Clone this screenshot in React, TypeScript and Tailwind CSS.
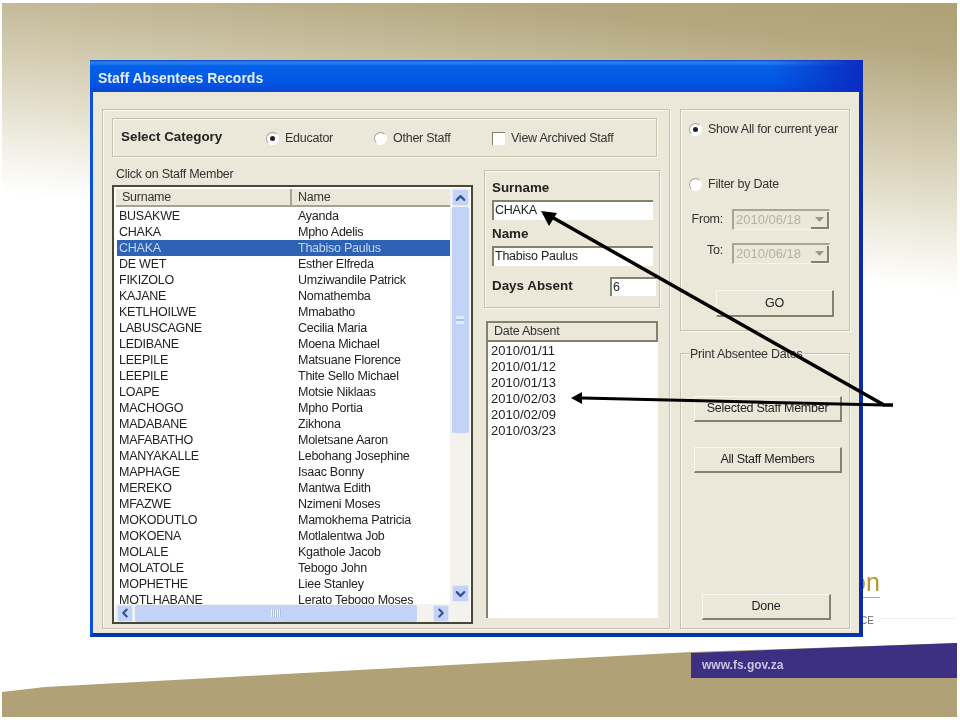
import { ChevronDown, ChevronLeft, ChevronRight, ChevronUp } from 'lucide-react';

const staff = [
  ['BUSAKWE', 'Ayanda'],
  ['CHAKA', 'Mpho Adelis'],
  ['CHAKA', 'Thabiso Paulus'],
  ['DE WET', 'Esther Elfreda'],
  ['FIKIZOLO', 'Umziwandile Patrick'],
  ['KAJANE', 'Nomathemba'],
  ['KETLHOILWE', 'Mmabatho'],
  ['LABUSCAGNE', 'Cecilia Maria'],
  ['LEDIBANE', 'Moena Michael'],
  ['LEEPILE', 'Matsuane Florence'],
  ['LEEPILE', 'Thite Sello Michael'],
  ['LOAPE', 'Motsie Niklaas'],
  ['MACHOGO', 'Mpho Portia'],
  ['MADABANE', 'Zikhona'],
  ['MAFABATHO', 'Moletsane Aaron'],
  ['MANYAKALLE', 'Lebohang Josephine'],
  ['MAPHAGE', 'Isaac Bonny'],
  ['MEREKO', 'Mantwa Edith'],
  ['MFAZWE', 'Nzimeni Moses'],
  ['MOKODUTLO', 'Mamokhema Patricia'],
  ['MOKOENA', 'Motlalentwa Job'],
  ['MOLALE', 'Kgathole Jacob'],
  ['MOLATOLE', 'Tebogo John'],
  ['MOPHETHE', 'Liee Stanley'],
  ['MOTLHABANE', 'Lerato Tebogo Moses'],
];

const dates = ['2010/01/11', '2010/01/12', '2010/01/13', '2010/02/03', '2010/02/09', '2010/03/23'];

const etched = 'border border-[#c4c1b0] shadow-[inset_1px_1px_0_#f8f7f0,1px_1px_0_#f8f7f0]';
const sunken = 'border-t-2 border-l-2 border-[#85816f] bg-white';
const boldLabel = 'font-bold text-[13.4px] tracking-normal text-[#222]';
const scrollBtn = 'flex items-center justify-center rounded-[2px] bg-[#c3d3f8] border border-[#dfe8fd] text-[#35508f]';

function Radio({ checked }: { checked?: boolean }) {
  return (
    <span className="flex h-[13px] w-[13px] shrink-0 items-center justify-center rounded-full border border-[#a5a294] border-r-white border-b-white bg-white">
      {checked && <span className="h-[5px] w-[5px] rounded-full bg-[#222]" />}
    </span>
  );
}

function Button({ label, className }: { label: string; className: string }) {
  return (
    <div className={`flex items-center justify-center border-t border-l border-t-[#f8f7f0] border-l-[#f8f7f0] border-r-2 border-b-2 border-r-[#85816f] border-b-[#85816f] bg-[#ebe8d9] text-[#222] ${className}`}>
      {label}
    </div>
  );
}

function DateCombo() {
  return (
    <div className="flex h-[21px] w-[98px] items-center border-t-2 border-l-2 border-t-[#a9a695] border-l-[#a9a695] border-r border-b border-r-[#f5f4ec] border-b-[#f5f4ec] pl-[2px] text-[13px] tracking-normal text-[#b4b1a3]">
      <span className="flex-1">2010/06/18</span>
      <span className="flex h-[17px] w-[18px] items-center justify-center border-r-2 border-b-2 border-[#85816f]">
        <svg width="9" height="5" viewBox="0 0 9 5">
          <path d="M0 0h9L4.500 5z" fill="#9b9888" />
        </svg>
      </span>
    </div>
  );
}

function StaffList() {
  return (
    <div className="flex h-[439px] w-[361px] flex-col border-2 border-[#4a4738] bg-white px-px pt-px">
      <div className="flex min-h-0 flex-1">
        <div className="flex w-[337px] flex-col overflow-hidden">
          <div className="flex h-[19px] shrink-0 border-t border-l border-white bg-[#ebe8d9] text-[#333]">
            <span className="w-[176px] border-r-2 border-b-2 border-[#a5a294] pl-[6px] leading-[17px]">Surname</span>
            <span className="flex-1 border-b-2 border-[#a5a294] pl-[6px] leading-[17px]">Name</span>
          </div>
          <div className="ml-[2px] overflow-hidden pt-px">
            {staff.map(([surname, name], i) => (
              <div
                key={i}
                className={`grid h-[16px] grid-cols-[179px_1fr] pl-[2px] leading-[16px] ${i === 2 ? 'bg-[#2e62b5] text-[#c6d6f2]' : 'text-[#222]'}`}
              >
                <span>{surname}</span>
                <span>{name}</span>
              </div>
            ))}
          </div>
        </div>
        <div className="flex w-[20px] flex-col items-center bg-[#f4f2ec] pt-px">
          <div className={`h-[17px] w-[17px] ${scrollBtn}`}>
            <ChevronUp size={16} strokeWidth={3.5} />
          </div>
          <div className="mt-[1px] flex h-[226px] w-[17px] items-center justify-center rounded-[2px] bg-[#c3d3f8]">
            <span className="h-[8px] w-[8px] border-y-2 border-[#dfe8fd] bg-[linear-gradient(180deg,#dfe8fd_30%,#aebfe8_30%,#aebfe8_70%,#dfe8fd_70%)]" />
          </div>
          <div className={`mt-auto mb-[2px] h-[17px] w-[17px] ${scrollBtn}`}>
            <ChevronDown size={16} strokeWidth={3.5} />
          </div>
        </div>
      </div>
      <div className="flex h-[18px] shrink-0 items-center gap-[2px] bg-[#f4f2ec] pl-[2px] pr-[20px]">
        <div className={`h-[17px] w-[16px] ${scrollBtn}`}>
          <ChevronLeft size={16} strokeWidth={3.5} />
        </div>
        <div className="flex h-[17px] w-[282px] items-center justify-center rounded-[2px] bg-[#c3d3f8]">
          <span className="h-[8px] w-[10px] bg-[repeating-linear-gradient(90deg,#eef3fe_0,#eef3fe_1px,#a9bbe6_1px,#a9bbe6_2px)]" />
        </div>
        <div className={`ml-[14px] h-[17px] w-[16px] ${scrollBtn}`}>
          <ChevronRight size={16} strokeWidth={3.5} />
        </div>
      </div>
    </div>
  );
}

function DetailsBox() {
  return (
    <div className={`h-[138px] w-[176px] pl-[7px] pr-[3px] pt-[9px] ${etched}`}>
      <div className={`h-[16px] leading-[16px] ${boldLabel}`}>Surname</div>
      <div className={`mt-[4px] h-[20px] w-[161px] pl-px leading-[16px] text-[#222] ${sunken}`}>CHAKA</div>
      <div className={`mt-[6px] h-[16px] leading-[16px] ${boldLabel}`}>Name</div>
      <div className={`mt-[4px] h-[20px] w-[161px] pl-px leading-[16px] text-[#222] ${sunken}`}>Thabiso Paulus</div>
      <div className="mt-[11px] flex h-[19px] items-center justify-between">
        <span className={boldLabel}>Days Absent</span>
        <span className={`h-[19px] w-[46px] pl-px leading-[16px] text-[#222] ${sunken}`}>6</span>
      </div>
    </div>
  );
}

function DatesList() {
  return (
    <div className="ml-[2px] mt-[13px] flex h-[297px] w-[172px] flex-col border-l-2 border-[#85816f] bg-white">
      <div className="h-[21px] border-2 border-l-0 border-[#85816f] bg-[#ebe8d9] pl-[6px] leading-[17px] text-[#333]">Date Absent</div>
      <div className="pl-[3px] pt-px text-[13px] tracking-normal text-[#222]">
        {dates.map((d) => (
          <div key={d} className="h-[16px] leading-[16px]">{d}</div>
        ))}
      </div>
    </div>
  );
}

function MainPanel() {
  return (
    <div className={`h-[520px] w-[568px] shrink-0 pl-[9px] pt-[8px] ${etched}`}>
      <div className={`flex h-[39px] w-[545px] items-center pl-[8px] ${etched}`}>
        <span className={`w-[145px] ${boldLabel}`}>Select Category</span>
        <label className="flex w-[108px] items-center gap-[6px] pt-[2px] text-[#333]">
          <Radio checked />
          Educator
        </label>
        <label className="flex w-[118px] items-center gap-[6px] pt-[2px] text-[#333]">
          <Radio />
          Other Staff
        </label>
        <label className="flex items-center gap-[6px] pt-[2px] text-[#333]">
          <span className="h-[13px] w-[13px] border-t border-l border-[#85816f] bg-white" />
          View Archived Staff
        </label>
      </div>
      <div className="flex">
        <div className="w-[372px] shrink-0">
          <div className="ml-[4px] mt-[9px] mb-[3px] h-[16px] leading-[16px] text-[#333]">Click on Staff Member</div>
          <StaffList />
        </div>
        <div>
          <div className="mt-[13px]">
            <DetailsBox />
          </div>
          <DatesList />
        </div>
      </div>
    </div>
  );
}

function FilterPanel() {
  return (
    <div className={`h-[222px] pl-[8px] pt-[11px] ${etched}`}>
      <label className="flex h-[16px] items-center gap-[6px] whitespace-nowrap text-[#333]">
        <Radio checked />
        Show All for current year
      </label>
      <label className="mt-[39px] flex h-[16px] items-center gap-[6px] text-[#333]">
        <Radio />
        Filter by Date
      </label>
      <div className="mt-[17px] flex items-center text-[#333]">
        <span className="w-[34px] text-right">From:</span>
        <span className="ml-[9px]">
          <DateCombo />
        </span>
      </div>
      <div className="mt-[13px] flex items-center text-[#333]">
        <span className="w-[34px] -translate-y-[3px] text-right">To:</span>
        <span className="ml-[9px]">
          <DateCombo />
        </span>
      </div>
      <Button label="GO" className="ml-[27px] mt-[26px] h-[27px] w-[118px]" />
    </div>
  );
}

function PrintPanel() {
  return (
    <div className={`relative mt-[22px] flex h-[276px] flex-col pl-[13px] pt-[42px] ${etched}`}>
      <span className="absolute -top-[9px] left-[9px] bg-[#ebe8d9] text-[#333]">Print Absentee Dates</span>
      <Button label="Selected Staff Member" className="h-[26px] w-[148px]" />
      <Button label="All Staff Members" className="mt-[25px] h-[26px] w-[148px]" />
      <Button label="Done" className="ml-[8px] mt-auto mb-[8px] h-[26px] w-[129px]" />
    </div>
  );
}

function Arrows() {
  return (
    <svg className="pointer-events-none absolute left-0 top-0" width="960" height="720" viewBox="0 0 960 720">
      <path d="M893 405H884L550 216" fill="none" stroke="#000" strokeWidth="3.500" />
      <path d="M541 211L557 213L549 226z" fill="#000" />
      <path d="M884 405L582 398" fill="none" stroke="#000" strokeWidth="3" />
      <path d="M571 398L582 392V404z" fill="#000" />
    </svg>
  );
}

export default function App() {
  return (
    <div className="relative h-[720px] w-[960px] overflow-hidden bg-white font-['Liberation_Sans',sans-serif] text-[12.5px] tracking-[-0.25px] blur-[0.3px]">
      {/* slide background */}
      <div className="absolute left-[2px] top-[3px] h-[297px] w-[955px] bg-[linear-gradient(186deg,#afa175_0%,#b5a880_13%,#c4ba99_25%,#e4dfcc_50%,#eeebdf_58%,#ffffff_73%)]" />
      <svg className="absolute left-0 top-0" width="960" height="720" viewBox="0 0 960 720">
        <path d="M2 692L45 687L691 652L957 643V717H2z" fill="#b0a276" />
        <path d="M691 653L957 643V678H691z" fill="#3d2f82" />
      </svg>
      <span className="absolute left-[702px] top-[657px] text-[12px] font-bold leading-[16px] tracking-normal text-[#c9c3e2]">www.fs.gov.za</span>
      <span className="absolute left-[852px] top-[567px] text-[25px] leading-[30px] tracking-normal text-[#b8962e]">on</span>
      <span className="absolute left-[800px] top-[597px] h-px w-[80px] bg-[#a8a8a8]" />
      <span className="absolute left-[860px] top-[615px] text-[10px] leading-[12px] tracking-normal text-[#666]">CE</span>
      <span className="absolute left-[880px] top-[618px] h-px w-[75px] bg-[#eeeeee]" />

      {/* dialog */}
      <div className="relative ml-[90px] mt-[60px] inline-flex h-[577px] w-[773px] flex-col align-top">
        <div className="flex h-[32px] items-center bg-[linear-gradient(90deg,#0000_88%,#0a2cc0_100%),linear-gradient(180deg,#0a4ccc_0%,#2c80f2_8%,#0560e8_20%,#0257e4_70%,#0a47d2_100%)] pl-[8px] pt-[4px] text-[14px] font-bold tracking-normal text-[#e6eefc]">
          Staff Absentees Records
        </div>
        <div className="flex min-h-0 flex-1 border-l-[3px] border-r-[4px] border-b-[4px] border-l-[#0a50e0] border-r-[#0a2ca8] border-b-[#0336b4] bg-[#ebe8d9] pl-[9px] pt-[17px]">
          <MainPanel />
          <div className="ml-[10px] w-[170px] shrink-0">
            <FilterPanel />
            <PrintPanel />
          </div>
        </div>
      </div>

      <Arrows />
    </div>
  );
}
